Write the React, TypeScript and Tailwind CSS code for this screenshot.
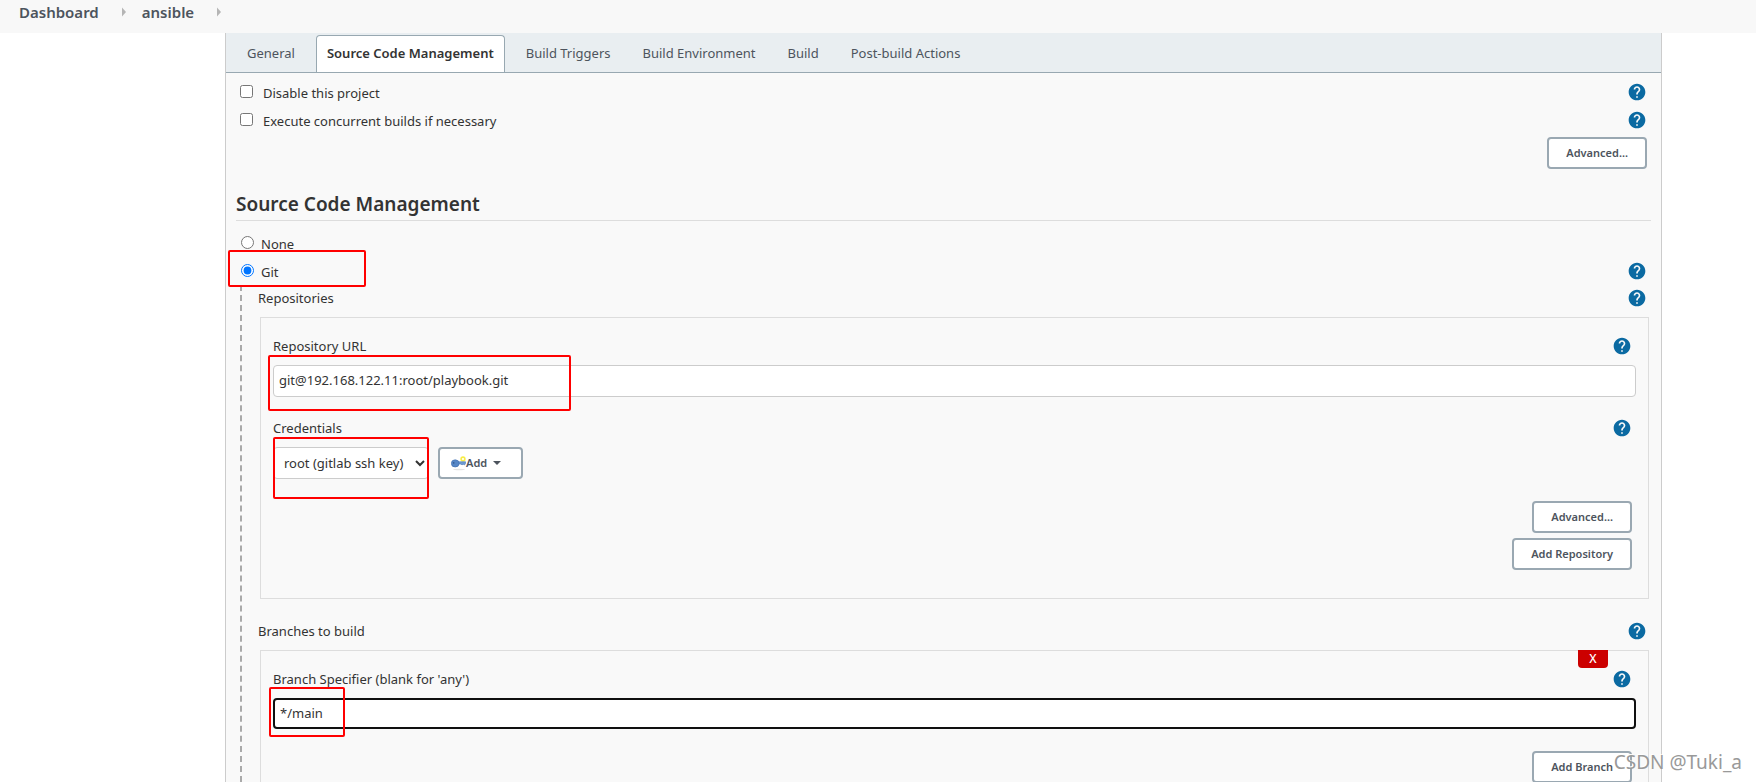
import type { ReactNode } from "react";
import { MdHelp } from "react-icons/md";

const tabs = ["General", "Source Code Management", "Build Triggers", "Build Environment", "Build", "Post-build Actions"];

function Crumb({ label }: { label: string }) {
  return (
    <li className="flex items-center">
      <a href="#" className="text-[15px] font-semibold text-[#4d545d]">{label}</a>
      <svg className="ml-[23px] mr-4" width="4" height="10" viewBox="0 0 4 10" aria-hidden="true">
        <path d="M0 0.5L4 5L0 9.5Z" fill="#b5b5b5" />
      </svg>
    </li>
  );
}

function HelpButton({ topic }: { topic: string }) {
  return (
    <button type="button" aria-label={`Help for ${topic}`} className="text-[#0b6aa2]">
      <MdHelp size={20} />
    </button>
  );
}

function OutlineButton({ children }: { children: ReactNode }) {
  return (
    <button
      type="button"
      className="h-8 rounded border-2 border-[#9aa8b2] bg-white px-[17px] text-[11px] font-semibold text-[#4d545d]"
    >
      {children}
    </button>
  );
}

// red frame drawn around a field that needs attention
function Mark({ className }: { className: string }) {
  return <span aria-hidden="true" className={`pointer-events-none absolute rounded-xs border-2 border-[#ff0000] ${className}`} />;
}

function Check({ id, label }: { id: string; label: string }) {
  return (
    <div className="flex h-7 items-center justify-between pr-1">
      <div className="flex items-center pl-1">
        <input id={id} type="checkbox" className="mb-[2px] size-[13px]" />
        <label htmlFor={id} className="pl-[10px] pt-[2px]">{label}</label>
      </div>
      <HelpButton topic={label} />
    </div>
  );
}

function SectionRow({ title }: { title: string }) {
  return (
    <div className="flex h-[26px] items-center justify-between pr-1">
      <span>{title}</span>
      <HelpButton topic={title} />
    </div>
  );
}

function FieldRow({ id, label }: { id: string; label: string }) {
  return (
    <div className="flex h-[26px] items-center justify-between pr-1">
      <label htmlFor={id}>{label}</label>
      <HelpButton topic={label} />
    </div>
  );
}

function KeyIcon() {
  return (
    <svg width="15" height="15" viewBox="0 0 15 15" aria-hidden="true">
      <ellipse cx="8" cy="13.5" rx="6" ry="0.7" fill="#e3e3e3" />
      <circle cx="12" cy="3" r="1.9" fill="#fff" stroke="#f7ec4a" strokeWidth="1.6" />
      <path d="M6 5.8H14.6V7.6L13.4 9L12.2 8.2L11 8.9L10 8.1H6Z" fill="#6f9bd3" stroke="#4677b5" strokeWidth="0.6" />
      <ellipse cx="4.2" cy="7.4" rx="3.9" ry="3.6" fill="#5586c6" stroke="#3f6fae" strokeWidth="0.6" />
      <circle cx="2.7" cy="6.9" r="0.8" fill="#34598d" />
    </svg>
  );
}

export default function App() {
  return (
    <div className="flex h-screen flex-col overflow-hidden bg-white font-['Noto_Sans',sans-serif] text-[13px] leading-5 text-[#333]">
      <header className="h-[33px] shrink-0 bg-[#f8f8f8] pl-[19px]">
        <ol className="flex h-6 items-center">
          <Crumb label="Dashboard" />
          <Crumb label="ansible" />
        </ol>
      </header>

      <main className="ml-[225px] mr-[94px] flex-1 border-x border-[#ccc] bg-[#f9f9f9]">
        <nav className="flex h-10 items-end gap-[10px] border-b border-[#98a8b1] bg-[#e9eef1] pl-[10px]">
          {tabs.map((tab) =>
            tab === "Source Code Management" ? (
              <a
                key={tab}
                href="#"
                className="flex h-[37px] items-center rounded-t border border-b-0 border-[#98a8b1] bg-white px-[10px] pb-[2px] font-semibold"
              >
                {tab}
              </a>
            ) : (
              <a key={tab} href="#" className="flex h-[37px] items-center px-[11px] pb-[2px] text-[#4d545d]">
                {tab}
              </a>
            )
          )}
        </nav>

        <form className="px-[10px] pt-[5px]">
          <Check id="disable" label="Disable this project" />
          <Check id="concurrent" label="Execute concurrent builds if necessary" />
          <div className="flex justify-end pr-1 pt-[3px]">
            <OutlineButton>Advanced...</OutlineButton>
          </div>

          <h2 className="mt-[18px] flex h-[34px] items-center border-b border-[#ddd] text-[19px] font-semibold">
            Source Code Management
          </h2>

          <div className="mt-2 flex h-7 items-center pl-[5px]">
            <input id="scm-none" type="radio" name="scm" className="mb-[2px] size-[13px]" />
            <label htmlFor="scm-none" className="pl-[7px] pt-[2px]">None</label>
          </div>
          <div className="relative flex h-7 items-center justify-between pl-[5px] pr-1">
            <div className="flex items-center">
              <input id="scm-git" type="radio" name="scm" defaultChecked className="mb-[2px] size-[13px]" />
              <label htmlFor="scm-git" className="pl-[7px] pt-[2px]">Git</label>
            </div>
            <HelpButton topic="Git" />
            <Mark className="-left-2 -top-[7px] h-[37px] w-[138px]" />
          </div>

          <div className="ml-1 border-l-2 border-dashed border-[#aaa] pl-4">
            <SectionRow title="Repositories" />
            <div className="mx-[2px] mt-[6px] border border-[#ddd] px-3 pb-7 pt-[15px]">
              <FieldRow id="repo-url" label="Repository URL" />
              <div className="relative mt-[6px]">
                <input
                  id="repo-url"
                  type="text"
                  defaultValue="git@192.168.122.11:root/playbook.git"
                  className="block h-8 w-full rounded border border-[#ccc] bg-white px-[5px] pb-[2px]"
                />
                <Mark className="-left-[5px] -top-[10px] h-14 w-[303px]" />
              </div>

              <div className="mt-[18px]">
                <FieldRow id="credentials" label="Credentials" />
              </div>
              <div className="relative mt-[6px] flex gap-[9px]">
                <select id="credentials" className="h-8 w-[156px] rounded border border-[#ccc] bg-white pl-[6px]">
                  <option>root (gitlab ssh key)</option>
                </select>
                <button
                  type="button"
                  className="flex h-8 w-[85px] items-center rounded border-2 border-[#9aa8b2] bg-white pl-[11px] text-[11px] font-semibold text-[#4d545d]"
                >
                  <KeyIcon />
                  Add
                  <svg className="ml-[6px]" width="8" height="4" viewBox="0 0 8 4" aria-hidden="true">
                    <path d="M0 0H8L4 4Z" fill="#4d545d" />
                  </svg>
                </button>
                <Mark className="-top-[10px] left-0 h-[62px] w-[156px]" />
              </div>

              <div className="mt-[22px] flex flex-col items-end gap-[5px] pr-1">
                <OutlineButton>Advanced...</OutlineButton>
                <OutlineButton>Add Repository</OutlineButton>
              </div>
            </div>

            <div className="mt-[19px]">
              <SectionRow title="Branches to build" />
            </div>
            <div className="relative mx-[2px] mt-[6px] border border-[#ddd] px-3 pb-7 pt-[15px]">
              <button
                type="button"
                aria-label="Delete branch"
                className="absolute -top-px right-10 h-[18px] w-[30px] rounded-b bg-[#cc0000] text-xs leading-none font-medium text-white"
              >
                X
              </button>
              <FieldRow id="branch" label="Branch Specifier (blank for 'any')" />
              <div className="relative mt-[6px]">
                <input
                  id="branch"
                  type="text"
                  defaultValue="*/main"
                  className="block h-[31px] w-full rounded border-2 border-[#101010] bg-white px-[5px] pb-[2px]"
                />
                <Mark className="-left-1 -top-[11px] h-[50px] w-[76px]" />
              </div>
              <div className="mt-[22px] flex justify-end pr-1">
                <OutlineButton>Add Branch</OutlineButton>
              </div>
            </div>
          </div>
        </form>
      </main>

      <span className="pointer-events-none absolute bottom-[10px] right-[14px] text-[19px] text-[#999] [text-shadow:-1px_-1px_0_#fff]">
        CSDN @Tuki_a
      </span>
    </div>
  );
}
